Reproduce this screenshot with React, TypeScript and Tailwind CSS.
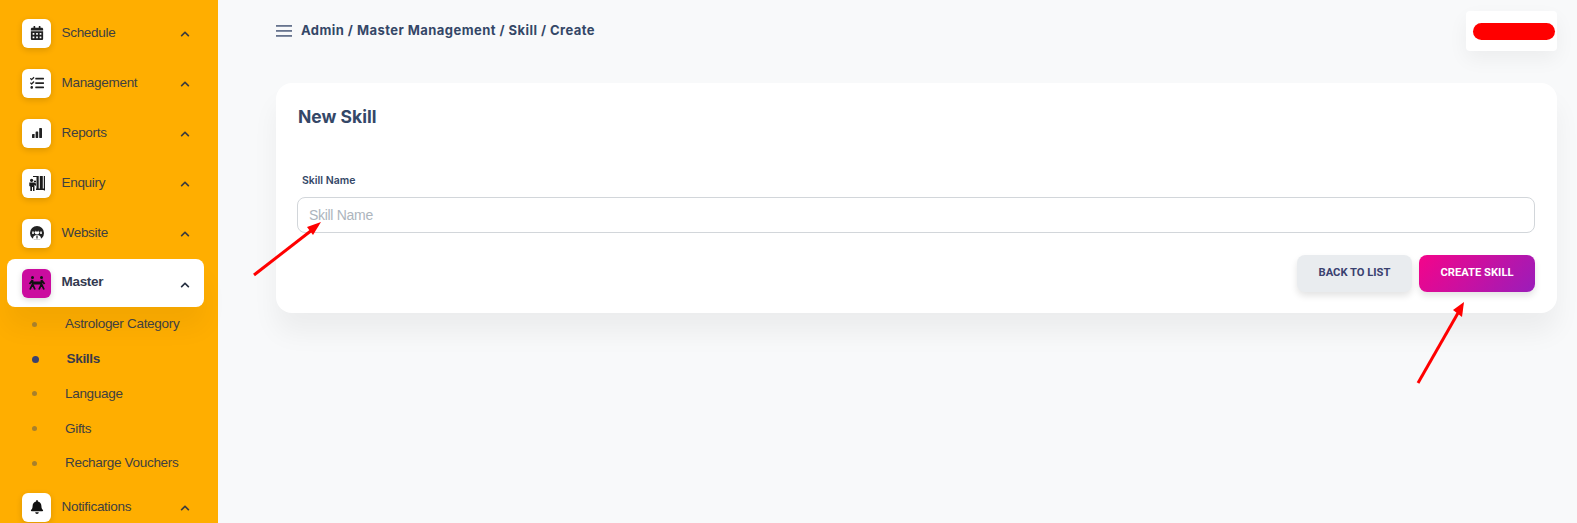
import React from "react";
import { FaCalendarAlt, FaTasks, FaBell, FaChevronUp } from "react-icons/fa";

function ReportsIcon() {
  return (
    <svg width="10" height="10" viewBox="0 0 10 10" fill="#222">
      <rect x="0" y="6" width="2.600" height="4" rx="0.400" />
      <rect x="3.600" y="3.500" width="2.600" height="6.500" rx="0.400" />
      <rect x="7.200" y="0" width="2.800" height="10" rx="0.400" />
    </svg>
  );
}

function EnquiryIcon() {
  return (
    <svg width="16" height="15" viewBox="0 0 16 15" fill="#1c1c1c">
      <path d="M4 0h5v1H4zM7.500 0h2.200v13H7.500zM10.800 0h3v13h-3zM14.800 0H16v14.500h-1.200zM7 12.500h9V14H7z" />
      <circle cx="2.600" cy="4.300" r="1.600" />
      <circle cx="6" cy="5.500" r="1.100" />
      <path d="M0.300 6.500h4.700l2 1V10L5.500 8.700V15H4v-4H3v4H1.300v-4.500L0.300 10z" />
    </svg>
  );
}

function WebsiteIcon() {
  return (
    <svg width="14" height="14" viewBox="0 0 14 14">
      <circle cx="7" cy="7" r="7" fill="#222" />
      <circle cx="7" cy="6.200" r="2.300" fill="#fff" />
      <path d="M5 4.500 7 3l2 1.500-.5 1h-3z" fill="#222" />
      <path d="M3 13c0-3 1.500-4 4-4s4 1 4 4l-2 .700h-4z" fill="#fff" />
      <path d="M6.400 9.500h1.200v3h-1.200z" fill="#222" />
      <path d="M2.200 5.500h1.600v2.500H2.200zM10.200 5.500h1.600v2.500h-1.600z" fill="#fff" />
    </svg>
  );
}

function MasterIcon() {
  return (
    <svg width="18" height="14" viewBox="0 0 18 14">
      <circle cx="4.500" cy="1.500" r="1.500" fill="#111" />
      <circle cx="13.500" cy="1.500" r="1.500" fill="#111" />
      <path
        d="M4.500 4v4M4.500 8 2 13.500M4.500 8 7 13.500M13.500 4v4M13.500 8 11 13.500M13.500 8 16 13.500M4.500 4 1.500 8M13.500 4 16.500 8"
        stroke="#111"
        strokeWidth="1.800"
        fill="none"
      />
      <rect x="4.500" y="5.500" width="9" height="3" fill="#111" />
    </svg>
  );
}

const navTop = [
  { label: "Schedule", icon: <FaCalendarAlt size={14} /> },
  { label: "Management", icon: <FaTasks size={14} /> },
  { label: "Reports", icon: <ReportsIcon /> },
  { label: "Enquiry", icon: <EnquiryIcon /> },
  { label: "Website", icon: <WebsiteIcon /> },
];

function NavRow({ label, icon }: { label: string; icon: React.ReactNode }) {
  return (
    <div className="flex h-[50px] shrink-0 items-start pl-[22px] pr-[28px] pt-[10px]">
      <div className="flex h-[29px] w-[29px] items-center justify-center rounded-md bg-white pb-px text-[#222] shadow-[0_2px_6px_rgba(0,0,0,0.15)]">
        {icon}
      </div>
      <span className="ml-[10.500px] flex-1 text-[13.500px] leading-[27px] tracking-[-0.3px] text-[#404040]">
        {label}
      </span>
      <FaChevronUp size={10} className="mt-[10px] text-[#3c3c3c]" />
    </div>
  );
}

function SubRow({ label, active = false }: { label: string; active?: boolean }) {
  return (
    <div className="flex h-[34.800px] shrink-0 items-center pl-[32px]">
      <span
        className={
          active
            ? "h-[7px] w-[7px] rounded-full bg-[#3a416f]"
            : "h-[5px] w-[5px] rounded-full bg-[#a8802c]"
        }
      />
      <span
        className={
          active
            ? "ml-[27.500px] text-[13.500px] font-bold tracking-[-0.3px] text-[#3a3a4a]"
            : "ml-[28px] text-[13.500px] tracking-[-0.3px] text-[#404040]"
        }
      >
        {label}
      </span>
    </div>
  );
}

export default function App() {
  return (
    <div className="relative flex h-[523px] w-[1577px] overflow-hidden bg-[#f8f9fa]">
      <aside className="flex w-[218px] shrink-0 flex-col bg-[#ffae00] pt-[9px] font-['Liberation_Sans',sans-serif]">
        {navTop.map((n) => (
          <NavRow key={n.label} label={n.label} icon={n.icon} />
        ))}
        <div className="ml-[7px] mr-[14px] flex h-12 shrink-0 items-center rounded-lg bg-white pl-[15px] pr-[14px] shadow-[0_20px_27px_rgba(0,0,0,0.05)]">
          <div className="flex h-[29px] w-[29px] items-center justify-center rounded-md bg-[#cb0c9f] shadow-[0_2px_6px_rgba(0,0,0,0.15)]">
            <MasterIcon />
          </div>
          <span className="mb-[2px] ml-[10.500px] flex-1 text-[13.500px] font-bold tracking-[-0.3px] text-[#333a50]">
            Master
          </span>
          <FaChevronUp size={10} className="mt-[3px] text-[#252f40]" />
        </div>
        <SubRow label="Astrologer Category" />
        <SubRow label="Skills" active />
        <SubRow label="Language" />
        <SubRow label="Gifts" />
        <SubRow label="Recharge Vouchers" />
        <div className="mt-[2px] shrink-0">
          <NavRow label="Notifications" icon={<FaBell size={14} color="#111" />} />
        </div>
      </aside>

      <main className="flex min-w-0 flex-1 flex-col pl-[58px] pr-[20px] pt-[11px] font-['Inter','Liberation_Sans',sans-serif]">
        <header className="flex h-[40px] items-center justify-between">
          <div className="flex items-center">
            <svg width="16" height="12" viewBox="0 0 16 12" fill="#67748e">
              <rect y="0" width="16" height="1.800" />
              <rect y="5" width="16" height="1.800" />
              <rect y="10" width="16" height="1.800" />
            </svg>
            <span className="ml-[9px] text-[13px] font-bold tracking-[0.45px] text-[#344767]">
              Admin / Master Management / Skill / Create
            </span>
          </div>
          <div className="flex h-[40px] w-[91px] items-center rounded bg-white pl-[7px] shadow-[0_8px_20px_rgba(0,0,0,0.05)]">
            <div className="h-[17px] w-[82px] rounded-full bg-[#ff0000]" />
          </div>
        </header>

        <section className="mt-[32px] h-[230px] rounded-2xl bg-white pl-[21px] pr-[22px] pt-[24px] shadow-[0_20px_27px_rgba(0,0,0,0.05)]">
          <h2 className="pl-px text-[17.500px] font-bold leading-[20px] text-[#344767]">New Skill</h2>
          <label className="mt-[47px] block pl-[5px] text-[10.500px] font-semibold leading-[14px] text-[#344767]">
            Skill Name
          </label>
          <input
            placeholder="Skill Name"
            className="mt-[9px] block h-[36px] w-full rounded-lg border border-[#d2d6da] bg-white px-[11px] font-['Liberation_Sans',sans-serif] text-[14px] tracking-[-0.3px] outline-none placeholder:text-[#adb5bd]"
          />
          <div className="mt-[22px] flex justify-end gap-[7px]">
            <button className="h-[37px] w-[115px] rounded-lg bg-[#e9ecef] font-['Roboto',sans-serif] text-[11.200px] font-bold text-[#3a416f] shadow-[0_4px_7px_rgba(0,0,0,0.11)]">
              BACK TO LIST
            </button>
            <button className="h-[37px] w-[116px] rounded-lg bg-[linear-gradient(310deg,#9a1dba,#f4048a)] font-['Roboto',sans-serif] text-[11.200px] font-bold text-white shadow-[0_4px_7px_rgba(0,0,0,0.11)]">
              CREATE SKILL
            </button>
          </div>
        </section>
      </main>

      <svg className="pointer-events-none absolute left-0 top-0" width="1577" height="523" viewBox="0 0 1577 523">
        <line x1="254" y1="275" x2="312" y2="230" stroke="#ff0000" strokeWidth="3" />
        <path d="M321 222 L307 227 L313 235 Z" fill="#ff0000" />
        <line x1="1418" y1="383" x2="1458" y2="313" stroke="#ff0000" strokeWidth="3" />
        <path d="M1464 302 L1453 310 L1462 317 Z" fill="#ff0000" />
      </svg>
    </div>
  );
}
